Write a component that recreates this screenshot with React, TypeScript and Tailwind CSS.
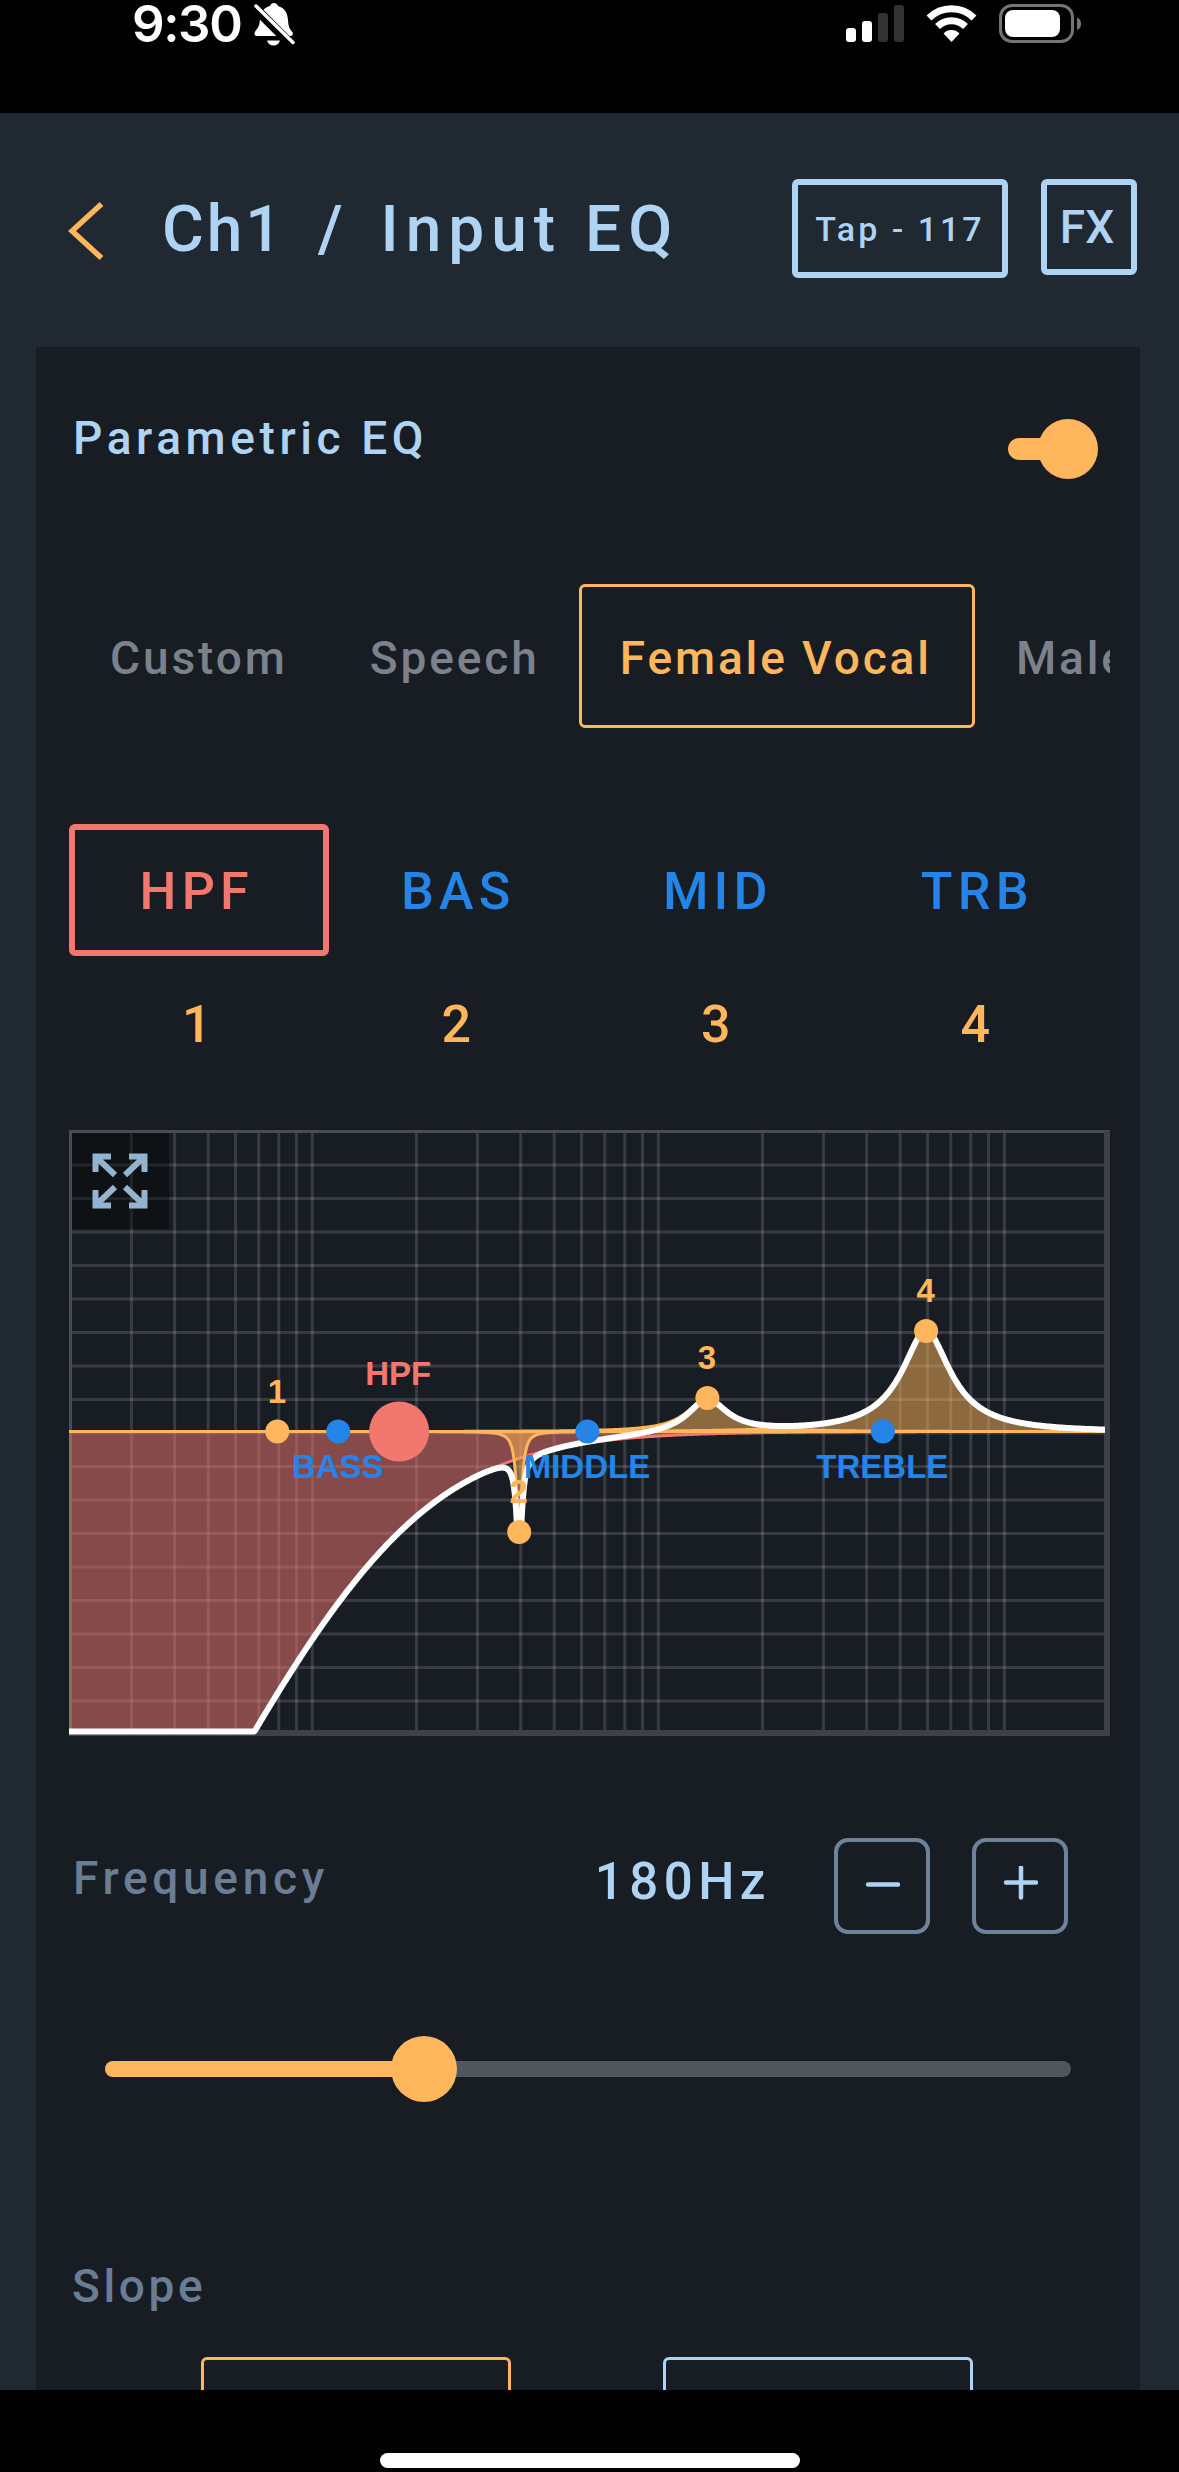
import React from 'react';

interface Band {
  label: string;
  freq: number;
  gain: number;
  q: number;
}

const bands: Band[] = [
  { label: '1', freq: 80, gain: 0, q: 2 },
  { label: '2', freq: 400, gain: -6, q: 24 },
  { label: '3', freq: 1400, gain: 2, q: 3.1 },
  { label: '4', freq: 6000, gain: 6, q: 2.5 },
];

const tones = [
  { label: 'BASS', freq: 120 },
  { label: 'MIDDLE', freq: 630 },
  { label: 'TREBLE', freq: 4500 },
];

const presets = ['Custom', 'Speech', 'Female Vocal', 'Male Vocal'];
const filters = ['HPF', 'BAS', 'MID', 'TRB'];

const HPF_FREQ = 180;
const WIDTH = 1041;
const HEIGHT = 606;
const ZERO = 301.5;
const DB = 16.75;
const DECADE = 346;

// 20 Hz sits on the left edge
const freqToX = (f: number) => Math.log10(f / 20) * DECADE;
const xToFreq = (x: number) => 20 * Math.pow(10, x / DECADE);
const dbToY = (db: number) => Math.min(601.5, ZERO - db * DB);

const hpfGain = (f: number) => -20 * Math.log10(1 + Math.pow(HPF_FREQ / f, 2));

const bandGain = (b: Band, f: number) => {
  const a = Math.pow(10, b.gain / 40);
  const u = Math.pow(f / b.freq - b.freq / f, 2);
  return 10 * Math.log10((u + Math.pow(a / b.q, 2)) / (u + Math.pow(1 / (a * b.q), 2)));
};

const totalGain = (f: number) => {
  const sum = bands.reduce((acc, b) => acc + bandGain(b, f), hpfGain(f));
  return f > 300 ? Math.max(sum, -6) : sum;
};

const trace = (fn: (f: number) => number) => {
  let d = '';
  for (let x = 0; x <= 1036; x += 1) {
    d += `${x === 0 ? 'M' : 'L'}${x} ${dbToY(fn(xToFreq(x))).toFixed(1)}`;
  }
  return d;
};

const gridFreqs: number[] = [];
[10, 100, 1000, 10000].forEach((base) => {
  for (let i = 1; i < 10; i++) {
    const f = base * i;
    if (f > 20 && f < 20000) gridFreqs.push(f);
  }
});

const EqGraph: React.FC = () => (
  <svg className="block" width={WIDTH} height={HEIGHT} viewBox={`0 0 ${WIDTH} ${HEIGHT}`}>
    <g stroke="#fff" strokeOpacity="0.14" strokeWidth="3">
      {gridFreqs.map((f) => (
        <line key={f} x1={freqToX(f) + 1.5} x2={freqToX(f) + 1.5} y1="3" y2="600" />
      ))}
      {Array.from({ length: 17 }, (_, i) => (
        <line key={i} y1={1.5 + (i + 1) * 33.5} y2={1.5 + (i + 1) * 33.5} x1="3" x2="1036" />
      ))}
    </g>
    <path d="M1.5 606V1.5H1041" fill="none" stroke="#494d52" strokeWidth="3" />
    <path d="M1038 1V603H0" fill="none" stroke="#3e4247" strokeWidth="6" />

    {/* expand button */}
    <rect x="3" y="3" width="97" height="96" fill="#000" fillOpacity="0.38" />
    <g fill="none" stroke="#93b3ce" strokeWidth="6">
      <path d="M27 27L46 45M26.500 42V26.500H42" />
      <path d="M75 27L56 45M75.500 42V26.500H60" />
      <path d="M27 75L46 57M26.500 60V75.500H42" />
      <path d="M75 75L56 57M75.500 60V75.500H60" />
    </g>

    <path d={`${trace(hpfGain)}V${ZERO}H0Z`} fill="#f2776f" fillOpacity="0.5" />
    <path d={trace(hpfGain)} fill="none" stroke="#f2776f" strokeWidth="3" />
    {bands.map((b) => (
      <g key={b.label}>
        <path d={`${trace((f) => bandGain(b, f))}V${ZERO}H0Z`} fill="#ffb65c" fillOpacity="0.5" />
        <path d={trace((f) => bandGain(b, f))} fill="none" stroke="#ffb65c" strokeWidth="3" />
      </g>
    ))}
    <path d={trace(totalGain)} fill="none" stroke="#fff" strokeWidth="6" strokeLinejoin="round" />

    <g fontFamily="'Liberation Sans', sans-serif" fontSize="33" fontWeight="700" textAnchor="middle">
      <circle cx={freqToX(HPF_FREQ)} cy={ZERO} r="30" fill="#f2776f" />
      <text x={freqToX(HPF_FREQ) - 1} y={ZERO - 47} fill="#f2776f">HPF</text>
      {tones.map((t) => (
        <g key={t.label} fill="#2484e8">
          <circle cx={freqToX(t.freq)} cy={ZERO} r="12" />
          <text x={freqToX(t.freq) - 0.5} y={ZERO + 46}>{t.label}</text>
        </g>
      ))}
      {bands.map((b) => (
        <g key={b.label} fill="#ffb65c">
          <circle cx={freqToX(b.freq)} cy={dbToY(b.gain)} r="12" />
          <text x={freqToX(b.freq) - 0.5} y={dbToY(b.gain) - 29}>{b.label}</text>
        </g>
      ))}
    </g>
  </svg>
);

const StatusBar: React.FC = () => (
  <div className="flex h-[113px] shrink-0 items-start bg-black pl-[132px] pr-[97px] text-white">
    <span className="font-['Inter','Liberation_Sans',sans-serif] text-[51px] font-semibold leading-[48px] tracking-[-1.400px]">9:30</span>
    <svg className="ml-[10px] mt-[2px]" width="46" height="46" viewBox="0 0 46 46">
      <path d="M19 4c1-4 7-4 8 0 7 2 9.500 7 10 14 .5 7 1.500 9 4.500 12 1 2 0 4-2 4H6c-3 0-3-3-1.500-5 3-4 4-5 4.500-12C9.500 10 12 6 19 4Z" fill="#fff" />
      <path d="M16 38.500h13c-1 3.500-3.500 5-6.500 5S17 42 16 38.500Z" fill="#fff" />
      <path d="M2 4L42 44" stroke="#000" strokeWidth="9.500" />
      <path d="M5 4L42 40.500" stroke="#fff" strokeWidth="3.500" strokeLinecap="round" />
    </svg>
    <svg className="ml-auto" width="240" height="48" viewBox="842 0 240 48">
      <g fill="#fff">
        <rect x="846" y="28" width="10" height="14" rx="3" />
        <rect x="862" y="21" width="10" height="21" rx="3" />
        <rect x="878" y="13" width="10" height="29" rx="3" fillOpacity="0.2" />
        <rect x="894" y="5" width="10" height="37" rx="3" fillOpacity="0.2" />
        <path d="M943.500 33.500a11 11 0 0 1 16 0L951.500 42Z" />
      </g>
      <g fill="none" stroke="#fff" strokeWidth="7">
        <path d="M937.500 26.500a20 20 0 0 1 28 0" />
        <path d="M929 18a32 32 0 0 1 45 0" />
      </g>
      <rect x="1000.500" y="5.500" width="72" height="36" rx="11.500" fill="none" stroke="#747474" strokeWidth="3" />
      <rect x="1005" y="10" width="55" height="27" rx="8" fill="#fff" />
      <path d="M1077 17.500c5.500 2 5.500 10.500 0 12.500Z" fill="#747474" />
    </svg>
  </div>
);

const App: React.FC = () => {
  return (
    <div className="flex h-[2472px] w-[1179px] flex-col overflow-hidden bg-[#202831] font-['Roboto','Liberation_Sans',sans-serif] text-[#afd3f2]">
      <StatusBar />

      <header className="flex h-[234px] shrink-0 items-start pl-[68px] pr-[42px] pt-[66px]">
        <svg className="mt-[22px]" width="36" height="60" viewBox="0 0 36 60" fill="none" stroke="#ffb65c" strokeWidth="5.500">
          <path d="M33.500 3L4 30L33.500 57" />
        </svg>
        <h1 className="ml-[58px] mt-[13px] whitespace-nowrap text-[64px] font-medium leading-[75px] tracking-[7px]">
          <span className="mr-[10px] tracking-[3px]">Ch1</span> <span className="mr-2">/</span> Input EQ
        </h1>
        <button className="ml-auto flex h-[99px] w-[216px] items-center justify-center whitespace-nowrap rounded-md border-[6px] border-[#afd3f2] text-[34px] font-medium leading-none tracking-[3px]">
          Tap - 117
        </button>
        <button className="ml-[33px] flex h-24 w-24 items-center justify-center rounded-md border-[6px] border-[#afd3f2] pr-1 text-[46px] font-medium leading-none">
          FX
        </button>
      </header>

      <main className="mx-9 flex h-[2043px] w-[1104px] shrink-0 flex-col overflow-hidden bg-[#181d23] pl-[33px]">
        <div className="flex h-[237px] shrink-0 items-start pl-1 pr-[42px] pt-[64px]">
          <h2 className="text-[46px] font-medium leading-[54px] tracking-[4.600px]">Parametric EQ</h2>
          <div className="relative ml-auto mt-[8px] flex h-[60px] w-[90px] items-center">
            <div className="h-[22px] w-[60px] rounded-full bg-[#ffb65c]"></div>
            <div className="absolute right-0 top-0 h-[60px] w-[60px] rounded-full bg-[#ffb65c]"></div>
          </div>
        </div>

        <div className="flex h-36 w-[1041px] shrink-0 overflow-hidden text-[46px] font-medium tracking-[2.900px]">
          {presets.map((name) => (
            <button
              key={name}
              className={`flex h-36 shrink-0 items-center whitespace-nowrap rounded-md border-[3px] pt-1 ${name === 'Female Vocal' ? '-ml-0.5 border-[#ffb65c] pl-[38px] pr-10 text-[#ffb65c]' : 'border-transparent px-[38px] text-[#7c828b]'}`}
            >
              {name}
            </button>
          ))}
        </div>

        <div className="mt-24 grid w-[1038px] shrink-0 grid-cols-4 text-[52px] font-medium leading-none">
          {filters.map((name) => (
            <button
              key={name}
              className={`flex h-[132px] items-center justify-center rounded-md border-[6px] pt-1 tracking-[5.200px] ${name === 'HPF' ? 'border-[#f2776f] pr-1 text-[#f2776f]' : 'border-transparent text-[#2484e8]'}`}
            >
              {name}
            </button>
          ))}
          {bands.map((b) => (
            <button key={b.label} className="flex h-[134px] items-center justify-center pr-1 pt-1 text-[#ffb65c]">
              {b.label}
            </button>
          ))}
        </div>

        <div className="mt-10 shrink-0">
          <EqGraph />
        </div>

        <div className="mt-[102px] flex h-[98px] shrink-0 items-start pl-1 pr-[72px]">
          <span className="mt-[13px] text-[46px] font-medium leading-[54px] tracking-[4.700px] text-[#6a7d95]">Frequency</span>
          <span className="ml-auto mt-[15px] text-[51px] font-medium leading-[58px] tracking-[5.500px]">180Hz</span>
          <button className="ml-[63px] flex h-24 w-24 items-center justify-center rounded-[14px] border-4 border-[#6f829b]">
            <svg width="36" height="36" viewBox="0 0 36 36" stroke="currentColor" strokeWidth="4.500" strokeLinecap="round">
              <path d="M4 16.500H34" />
            </svg>
          </button>
          <button className="ml-[42px] flex h-24 w-24 items-center justify-center rounded-[14px] border-4 border-[#6f829b]">
            <svg width="36" height="40" viewBox="0 0 36 40" stroke="currentColor" strokeWidth="4.500" strokeLinecap="round">
              <path d="M4 16.500H34M19 1.500V31.500" />
            </svg>
          </button>
        </div>

        <div className="relative ml-9 mt-[100px] flex h-[66px] w-[966px] shrink-0 items-center">
          <div className="h-4 w-full rounded-full bg-[#50565d]"></div>
          <div className="absolute left-0 h-4 w-[320px] rounded-full bg-[#ffb65c]"></div>
          <div className="absolute left-[286px] h-[66px] w-[66px] rounded-full bg-[#ffb65c]"></div>
        </div>

        <div className="mt-[157px] shrink-0 pl-[3px] text-[46px] font-medium leading-[54px] tracking-[3.600px] text-[#6a7d95]">Slope</div>
        <div className="ml-[132px] mt-[44px] flex shrink-0 gap-[152px]">
          <div className="h-36 w-[310px] rounded-md border-[3px] border-[#ffb65c]"></div>
          <div className="h-36 w-[310px] rounded-md border-[3px] border-[#afd3f2]"></div>
        </div>
      </main>

      <footer className="flex h-[82px] shrink-0 items-end justify-center bg-black pb-1">
        <div className="h-[15px] w-[420px] rounded-full bg-white"></div>
      </footer>
    </div>
  );
};

export default App;
